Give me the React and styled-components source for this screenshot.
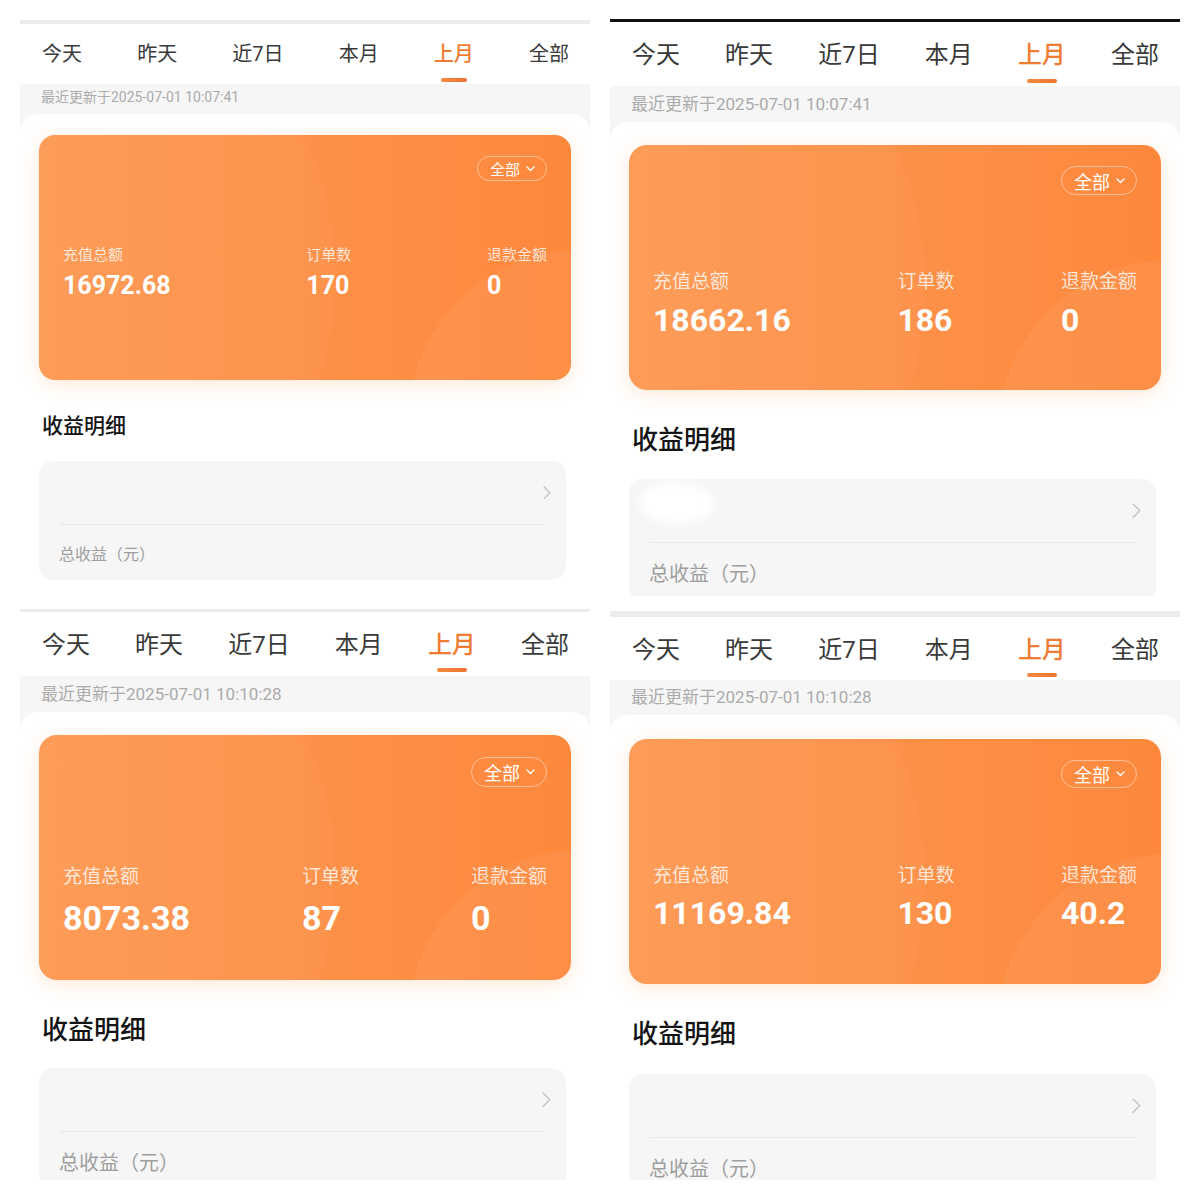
import React from 'react'
import styled, { createGlobalStyle } from 'styled-components'

const GlobalStyle = createGlobalStyle`
  html, body { margin: 0; padding: 0; background: #fff; }
  body { font-family: Roboto, "Noto Sans CJK SC", sans-serif; }
`

const TABS = ['今天', '昨天', '近7日', '本月', '上月', '全部']

const BASE = {
  mt: 0, line: 3, lineColor: '#ececec', tabH: 64, tabFs: 24, barW: 30, barB: 3,
  bandH: 36, bandPt: 6, bandFs: 17, bandLh: 24, cardMt: 23, radius: 18,
  pillTop: 21, pillH: 29, pillFs: 18, statsTop: 75, labelFs: 19, labelLh: 24,
  valGap: 7, valueFs: 32, valueLh: 38, hMt: 33, hFs: 26, hLh: 34, hMb: 22,
  rowH: 63, chevW: 9, botH: 58, botFs: 20,
}

const panels = [
  {
    m: {
      ...BASE, mt: 1, h: 589, line: 4, tabH: 60, tabFs: 20, barW: 26, barB: 2,
      bandH: 30, bandPt: 3, bandFs: 14, bandLh: 20, cardMt: 21, radius: 16,
      pillH: 25, pillFs: 15, statsTop: 64, labelFs: 15, labelLh: 20, valGap: 6,
      valueFs: 25, valueLh: 30, hMt: 32, hFs: 21, hLh: 28, hMb: 21, chevW: 8,
      botH: 55, botFs: 16,
    },
    time: '2025-07-01 10:07:41',
    stats: ['16972.68', '170', '0'],
  },
  {
    m: { ...BASE, h: 577, lineColor: '#111' },
    time: '2025-07-01 10:07:41',
    stats: ['18662.16', '186', '0'],
    smudge: true,
  },
  {
    m: {
      ...BASE, h: 571, barB: 4, pillTop: 22, pillH: 30, statsTop: 78,
      valGap: 10, valueFs: 34, hMb: 21,
    },
    time: '2025-07-01 10:10:28',
    stats: ['8073.38', '87', '0'],
  },
  {
    m: {
      ...BASE, mt: 2, h: 569, line: 6, tabH: 63, bandH: 35, bandPt: 5,
      cardMt: 24, pillH: 28, statsTop: 76, valGap: 6, hMb: 23,
    },
    time: '2025-07-01 10:10:28',
    stats: ['11169.84', '130', '40.2'],
  },
]

const Page = styled.div`
  width: 1200px;
  box-sizing: border-box;
  padding: 19px 20px 20px;
  display: grid;
  grid-template-columns: 570px 570px;
  grid-template-rows: 590px 571px;
  column-gap: 20px;
`

const Panel = styled.section`
  margin-top: ${p => p.$m.mt}px;
  height: ${p => p.$m.h}px;
  overflow: hidden;
  display: flex;
  flex-direction: column;
  background: #f6f6f6;
`

const TopLine = styled.div`
  height: ${p => p.$m.line}px;
  background: ${p => p.$m.lineColor};
  flex-shrink: 0;
`

const TabBar = styled.nav`
  height: ${p => p.$m.tabH}px;
  flex-shrink: 0;
  padding: 0 21px 0 22px;
  background: #fff;
  display: flex;
  justify-content: space-between;
  align-items: stretch;
`

const Tab = styled.div`
  position: relative;
  display: flex;
  align-items: center;
  padding-bottom: 3px;
  font-size: ${p => p.$m.tabFs}px;
  color: ${p => (p.$active ? '#f07b32' : '#3a3a3a')};
  font-weight: ${p => (p.$active ? 500 : 400)};
  &::after {
    content: '';
    display: ${p => (p.$active ? 'block' : 'none')};
    position: absolute;
    left: 50%;
    bottom: ${p => p.$m.barB}px;
    width: ${p => p.$m.barW}px;
    height: 4px;
    border-radius: 2px;
    transform: translateX(-50%);
    background: linear-gradient(90deg, #f58a40, #ec7430);
  }
`

const Band = styled.div`
  height: ${p => p.$m.bandH}px;
  flex-shrink: 0;
  box-sizing: border-box;
  padding: ${p => p.$m.bandPt}px 22px 0 21px;
  font-size: ${p => p.$m.bandFs}px;
  line-height: ${p => p.$m.bandLh}px;
  color: #ababab;
`

const Sheet = styled.div`
  flex: 1;
  background: #fff;
  border-radius: 18px 18px 0 0;
  padding: ${p => p.$m.cardMt}px 19px 0;
`

const Card = styled.div`
  height: 245px;
  box-sizing: border-box;
  border-radius: ${p => p.$m.radius}px;
  padding: ${p => p.$m.pillTop}px 24px 0;
  display: flex;
  flex-direction: column;
  box-shadow: 0 4px 18px rgba(255, 150, 70, 0.22);
  background:
    radial-gradient(circle 175px at 102% 118%, rgba(255, 255, 255, 0.05) 0 99%, transparent 100%),
    radial-gradient(circle 340px at -8% 58%, rgba(255, 255, 255, 0.025) 0 99%, transparent 100%),
    linear-gradient(90deg, #fd9a54 0%, #fd9149 50%, #fd883c 100%);
`

const Pill = styled.div`
  align-self: flex-end;
  height: ${p => p.$m.pillH}px;
  box-sizing: border-box;
  padding: 0 11px 0 12px;
  border: 1px solid rgba(255, 255, 255, 0.45);
  border-radius: 999px;
  display: flex;
  align-items: center;
  gap: 6px;
  color: #fff;
  font-size: ${p => p.$m.pillFs}px;
`

const Stats = styled.div`
  margin-top: ${p => p.$m.statsTop}px;
  display: flex;
  justify-content: space-between;
`

const Stat = styled.div`
  display: flex;
  flex-direction: column;
`

const Label = styled.div`
  font-size: ${p => p.$m.labelFs}px;
  line-height: ${p => p.$m.labelLh}px;
  color: rgba(255, 255, 255, 0.78);
`

const Value = styled.div`
  margin-top: ${p => p.$m.valGap}px;
  font-size: ${p => p.$m.valueFs}px;
  line-height: ${p => p.$m.valueLh}px;
  font-weight: 700;
  color: #fff;
`

const Heading = styled.h2`
  margin: ${p => p.$m.hMt}px 0 ${p => p.$m.hMb}px 3px;
  font-size: ${p => p.$m.hFs}px;
  line-height: ${p => p.$m.hLh}px;
  font-weight: 500;
  color: #141414;
`

const Detail = styled.div`
  position: relative;
  margin-right: 5px;
  background: #f6f6f6;
  border-radius: 14px;
  overflow: hidden;
`

const DetailTop = styled.div`
  height: ${p => p.$m.rowH}px;
  display: flex;
  justify-content: flex-end;
  align-items: center;
  padding: 0 15px;
`

const Divider = styled.div`
  height: 1px;
  margin: 0 20px;
  background: #e8e8e8;
`

const DetailBottom = styled.div`
  height: ${p => p.$m.botH}px;
  display: flex;
  align-items: center;
  padding: 0 20px;
  font-size: ${p => p.$m.botFs}px;
  color: #9e9e9e;
`

const Smudge = styled.div`
  position: absolute;
  left: 12px;
  top: 4px;
  width: 74px;
  height: 40px;
  border-radius: 40% 60% 50% 50%;
  background: #fff;
  filter: blur(5px);
`

const ChevronDown = () => (
  <svg width="9" height="6" viewBox="0 0 9 6" fill="none">
    <polyline points="1,1 4.5,4.5 8,1" stroke="#fff" strokeWidth="1.4" strokeLinecap="round" strokeLinejoin="round" />
  </svg>
)

const ChevronRight = ({ w }) => (
  <svg width={w} height={w * 1.7} viewBox="0 0 8 14" fill="none">
    <polyline points="1,1 7,7 1,13" stroke="#bdbdbd" strokeWidth="1.2" strokeLinecap="round" strokeLinejoin="round" />
  </svg>
)

const LABELS = ['充值总额', '订单数', '退款金额']

function Screen({ m, time, stats, smudge }) {
  return (
    <Panel $m={m}>
      <TopLine $m={m} />
      <TabBar $m={m}>
        {TABS.map(t => (
          <Tab key={t} $m={m} $active={t === '上月'}>{t}</Tab>
        ))}
      </TabBar>
      <Band $m={m}>最近更新于{time}</Band>
      <Sheet $m={m}>
        <Card $m={m}>
          <Pill $m={m}>全部<ChevronDown /></Pill>
          <Stats $m={m}>
            {LABELS.map((l, i) => (
              <Stat key={l}>
                <Label $m={m}>{l}</Label>
                <Value $m={m}>{stats[i]}</Value>
              </Stat>
            ))}
          </Stats>
        </Card>
        <Heading $m={m}>收益明细</Heading>
        <Detail>
          {smudge && <Smudge />}
          <DetailTop $m={m}><ChevronRight w={m.chevW} /></DetailTop>
          <Divider />
          <DetailBottom $m={m}>总收益（元）</DetailBottom>
        </Detail>
      </Sheet>
    </Panel>
  )
}

export default function App() {
  return (
    <>
      <GlobalStyle />
      <Page>
        {panels.map((p, i) => (
          <Screen key={i} {...p} />
        ))}
      </Page>
    </>
  )
}
